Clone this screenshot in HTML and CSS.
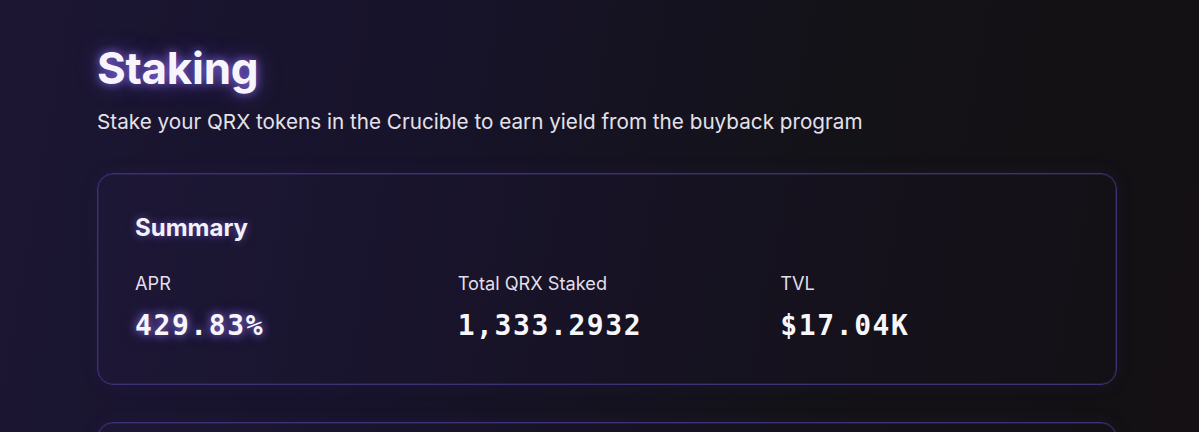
FILE: index.html
```html
<!DOCTYPE html>
<html lang="en">
<head>
<meta charset="utf-8">
<title>Staking</title>
<link rel="stylesheet" href="styles.css">
</head>
<body>
<main class="page">
  <header class="page-head">
    <h1 class="title">Staking</h1>
    <p class="subtitle">Stake your QRX tokens in the Crucible to earn yield from the buyback program</p>
  </header>
  <section class="card">
    <h2 class="card-title">Summary</h2>
    <div class="stats">
      <div class="stat">
        <div class="stat-label">APR</div>
        <div class="stat-value glow">429.83%</div>
      </div>
      <div class="stat">
        <div class="stat-label">Total QRX Staked</div>
        <div class="stat-value">1,333.2932</div>
      </div>
      <div class="stat">
        <div class="stat-label">TVL</div>
        <div class="stat-value">$17.04K</div>
      </div>
    </div>
  </section>
  <section class="card card-next"></section>
</main>
</body>
</html>
```
FILE: styles.css
```css
html, body {
  margin: 0;
  height: 100%;
}
body {
  background: linear-gradient(100deg, #1c1633 0%, #17132a 35%, #131216 70%, #141013 100%);
  font-family: Inter, "Noto Sans", sans-serif;
  color: #f2f0f7;
  overflow: hidden;
}
.page {
  width: 1020px;
  padding: 40px 0 0 97px;
}
.title {
  margin: 0;
  font-size: 44px;
  font-weight: 700;
  line-height: 56px;
  letter-spacing: -0.3px;
  color: #f7f5fb;
  text-shadow: 0 0 10px rgba(150, 120, 255, 0.8), 0 0 22px rgba(120, 90, 240, 0.55);
}
.subtitle {
  margin: 13px 0 0;
  font-size: 20.7px;
  line-height: 26px;
  color: #e4e1ec;
}
.card {
  margin-top: 38px;
  box-sizing: border-box;
  border: 1px solid #3c3275;
  border-radius: 16px;
  background: linear-gradient(100deg, rgba(30, 24, 56, 0.75) 0%, rgba(24, 19, 40, 0.7) 45%, rgba(19, 16, 22, 0.7) 100%);
  box-shadow: inset 0 0 0 1px rgba(80, 64, 150, 0.25), 0 0 18px rgba(70, 50, 150, 0.12);
  padding: 39px 37px 41px;
}
.card-title {
  margin: 0;
  font-size: 24px;
  line-height: 30px;
  font-weight: 700;
  color: #f3f1f8;
  text-shadow: 0 0 8px rgba(140, 110, 250, 0.6);
}
.stats {
  margin-top: 29px;
  display: grid;
  grid-template-columns: repeat(3, 1fr);
  column-gap: 24px;
}
.stat-label {
  font-size: 18.2px;
  line-height: 22px;
  color: #e2dfea;
}
.stat-value {
  margin-top: 15px;
  font-family: "DejaVu Sans Mono", "Liberation Mono", monospace;
  font-weight: 700;
  font-size: 28px;
  line-height: 34px;
  letter-spacing: 1.6px;
  color: #f7f6fa;
}
.glow {
  text-shadow: 0 0 8px rgba(160, 130, 255, 0.75), 0 0 16px rgba(120, 90, 240, 0.45);
}
.card-next {
  margin-top: 37px;
  height: 120px;
  padding: 0;
}
```
